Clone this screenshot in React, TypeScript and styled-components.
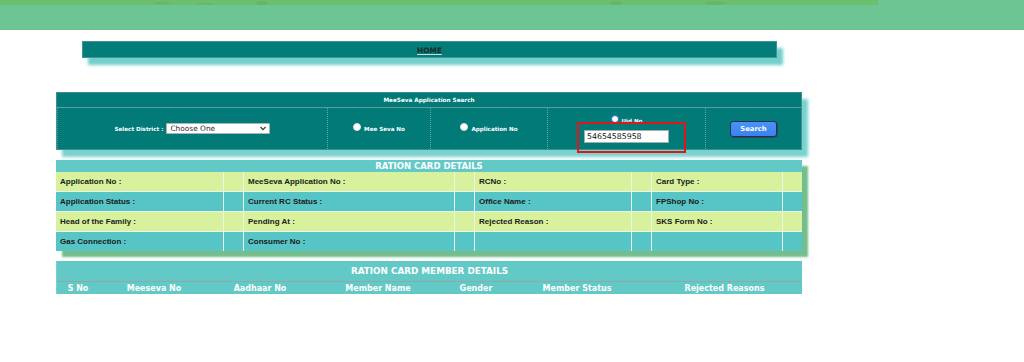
import React from "react";
import styled, { createGlobalStyle } from "styled-components";

const GlobalStyle = createGlobalStyle`
  html, body { margin: 0; padding: 0; background: #ffffff; }
  body { font-family: "Liberation Sans", Arial, sans-serif; }
  * { box-sizing: border-box; }
`;

const VERDANA = `"DejaVu Sans", Verdana, sans-serif`;
const ARIAL = `"Liberation Sans", Arial, sans-serif`;

const Page = styled.div`
  width: 1024px;
  min-height: 362px;
  background: #ffffff;
`;

const Banner = styled.header`
  height: 30px;
  background: #6cc593;
  border-bottom: 1px solid #6fbf8f;
`;

const BannerStrip = styled.svg`
  display: block;
  width: 878px;
  height: 5px;
  overflow: hidden;
`;

const Main = styled.main`
  width: 802px;
  padding-left: 56px;
  display: flex;
  flex-direction: column;
`;

const NavBar = styled.nav`
  margin: 11px 25px 0 26px;
  height: 17px;
  background: #037c7a;
  border: 1px solid #3c9593;
  box-shadow: 6px 7px 3px #72cfcb;
  display: flex;
  align-items: center;
  justify-content: center;
`;

const HomeLink = styled.a`
  font-family: ${VERDANA};
  font-weight: bold;
  font-size: 7.4px;
  color: #1d2a2a;
  text-decoration: underline;
  text-decoration-color: #c8d8d8;
  margin-top: 2px;
`;

const SearchPanel = styled.section`
  margin-top: 34px;
  background: #027a77;
  border: 1px solid #3e8f8d;
  box-shadow: 6px 7px 3px #7ad2ce;
`;

const PanelTitle = styled.div`
  height: 15px;
  border-bottom: 1px solid #5f9d9b;
  display: flex;
  align-items: center;
  justify-content: center;
  font-family: ${VERDANA};
  font-weight: bold;
  font-size: 5.7px;
  color: #ffffff;
`;

const SearchRow = styled.div`
  display: grid;
  grid-template-columns: 270px 103px 117px 158px 96px;
  height: 41px;
`;

const SearchCell = styled.div<{ $stack?: boolean }>`
  position: relative;
  display: flex;
  flex-direction: ${(p) => (p.$stack ? "column" : "row")};
  align-items: center;
  justify-content: center;
  gap: ${(p) => (p.$stack ? "6px" : "3px")};
  border-left: 1px dotted rgba(200, 230, 228, 0.45);
  &:first-child { border-left: 1px dotted rgba(200, 230, 228, 0.35); }
`;

const FieldLabel = styled.label<{ $raise?: number }>`
  font-family: ${VERDANA};
  font-weight: bold;
  font-size: 5.6px;
  color: #ffffff;
  display: inline-flex;
  align-items: center;
  gap: 3px;
  margin-top: ${(p) => p.$raise ?? 0}px;
`;

const Radio = styled.span<{ $checked?: boolean }>`
  display: inline-block;
  width: 8px;
  height: 8px;
  border-radius: 50%;
  background: #ffffff;
  border: ${(p) => (p.$checked ? "1.6px solid #1c6fe6" : "1px solid #d9e4e4")};
  margin-top: -4px;
`;

const SelectWrap = styled.div`
  position: relative;
  width: 104px;
  height: 11px;
`;

const Select = styled.select`
  display: block;
  appearance: none;
  -webkit-appearance: none;
  width: 100%;
  height: 11px;
  margin: 0;
  padding: 0 0 0 3px;
  border: 1px solid #a9b4b4;
  border-radius: 1px;
  background: #ffffff;
  font-family: ${VERDANA};
  font-size: 7.4px;
  line-height: 9px;
  color: #2b2b2b;
`;

const Chevron = styled.svg`
  position: absolute;
  right: 4px;
  top: 3px;
  width: 6px;
  height: 5px;
  pointer-events: none;
`;

const UidInput = styled.input`
  display: block;
  width: 85px;
  height: 13px;
  margin: 0;
  padding: 0 0 0 2px;
  border: 1px solid #9fb0b0;
  background: #ffffff;
  font-family: ${VERDANA};
  font-size: 7.8px;
  color: #111111;
`;

const Highlight = styled.div`
  position: absolute;
  left: 29px;
  top: 14px;
  width: 109px;
  height: 31px;
  border: 2px solid #e0161b;
  pointer-events: none;
`;

const SearchButton = styled.button`
  width: 47px;
  height: 16px;
  padding: 0;
  margin-top: 1px;
  background: linear-gradient(#4b92f6, #3a82ee);
  border: 1.5px solid #1f3350;
  border-radius: 3px;
  box-shadow: 1px 1px 0 #2a4a5a;
  font-family: ${VERDANA};
  font-weight: bold;
  font-size: 6.8px;
  color: #ffffff;
`;

const Details = styled.section`
  margin-top: 10px;
  background: #e9f6ea;
  box-shadow: 6px 6px 2px #74bd8c;
`;

const DetailsTitle = styled.div`
  height: 12px;
  background: #62c9c7;
  display: flex;
  align-items: center;
  justify-content: center;
  font-family: ${VERDANA};
  font-weight: bold;
  font-size: 8.5px;
  color: #ffffff;
`;

const DetailRows = styled.div`
  display: flex;
  flex-direction: column;
  gap: 1px;
  background: #e9f6ea;
`;

const DetailRow = styled.div`
  display: grid;
  grid-template-columns: 167px 19px 210px 19px 156px 19px 130px 19px;
  column-gap: 1px;
  height: 19px;
`;

const DetailCell = styled.div<{ $tone: "yellow" | "teal" }>`
  background: ${(p) => (p.$tone === "yellow" ? "#d8f19c" : "#57c5c5")};
  display: flex;
  align-items: center;
  padding-left: 4px;
  font-family: ${ARIAL};
  font-weight: bold;
  font-size: 8px;
  color: #1a1a1a;
  white-space: nowrap;
`;

const Members = styled.section`
  margin-top: 10px;
  background: #63c9c6;
  border-left: 1px dotted #8fd6d3;
`;

const MembersTitle = styled.div`
  height: 21px;
  border-bottom: 1px solid #8fa9a8;
  display: flex;
  align-items: center;
  justify-content: center;
  font-family: ${VERDANA};
  font-weight: bold;
  font-size: 8.8px;
  color: #ffffff;
`;

const MemberHead = styled.div`
  display: grid;
  grid-template-columns: 42px 110px 102px 134px 62px 140px 155px;
  height: 12px;
`;

const MemberCol = styled.div`
  display: flex;
  align-items: center;
  justify-content: center;
  font-family: ${VERDANA};
  font-weight: bold;
  font-size: 8px;
  color: #ffffff;
  white-space: nowrap;
`;

type Tone = "yellow" | "teal";

const detailRows: { tone: Tone; cells: string[] }[] = [
  { tone: "yellow", cells: ["Application No :", "MeeSeva Application No :", "RCNo :", "Card Type :"] },
  { tone: "teal", cells: ["Application Status :", "Current RC Status :", "Office Name :", "FPShop No :"] },
  { tone: "yellow", cells: ["Head of the Family :", "Pending At :", "Rejected Reason :", "SKS Form No :"] },
  { tone: "teal", cells: ["Gas Connection :", "Consumer No :", "", ""] },
];

const memberCols = ["S No", "Meeseva No", "Aadhaar No", "Member Name", "Gender", "Member Status", "Rejected Reasons"];

export default function App() {
  return (
    <Page>
      <GlobalStyle />
      <Banner>
        <BannerStrip viewBox="0 0 878 5" preserveAspectRatio="none">
          <rect x="0" y="0" width="878" height="5" fill="#6bbf6d" />
          <ellipse cx="162" cy="3" rx="8" ry="1.5" fill="#66b76a" />
          <ellipse cx="205" cy="4" rx="9" ry="1.2" fill="#67b86a" />
          <ellipse cx="262" cy="3" rx="6" ry="2" fill="#64b568" />
          <ellipse cx="616" cy="3" rx="6" ry="2" fill="#65b669" />
          <ellipse cx="716" cy="3" rx="11" ry="2" fill="#66b76a" />
        </BannerStrip>
      </Banner>
      <Main>
        <NavBar>
          <HomeLink>HOME</HomeLink>
        </NavBar>

        <SearchPanel>
          <PanelTitle>MeeSeva Application Search</PanelTitle>
          <SearchRow>
            <SearchCell>
              <FieldLabel>Select District :</FieldLabel>
              <SelectWrap>
                <Select defaultValue="0">
                  <option value="0">Choose One</option>
                </Select>
                <Chevron viewBox="0 0 6 5">
                  <path d="M0.5 1 L3 3.6 L5.5 1" fill="none" stroke="#333" strokeWidth="1.1" />
                </Chevron>
              </SelectWrap>
            </SearchCell>
            <SearchCell>
              <FieldLabel>
                <Radio />
                Mee Seva No
              </FieldLabel>
            </SearchCell>
            <SearchCell>
              <FieldLabel>
                <Radio />
                Application No
              </FieldLabel>
            </SearchCell>
            <SearchCell $stack>
              <FieldLabel $raise={4}>
                <Radio $checked />
                Uid No
              </FieldLabel>
              <UidInput defaultValue="54654585958" />
              <Highlight />
            </SearchCell>
            <SearchCell>
              <SearchButton>Search</SearchButton>
            </SearchCell>
          </SearchRow>
        </SearchPanel>

        <Details>
          <DetailsTitle>RATION CARD DETAILS</DetailsTitle>
          <DetailRows>
            {detailRows.map((row, i) => (
              <DetailRow key={i}>
                {row.cells.map((c, j) => (
                  <React.Fragment key={j}>
                    <DetailCell $tone={row.tone}>{c}</DetailCell>
                    <DetailCell $tone={row.tone} />
                  </React.Fragment>
                ))}
              </DetailRow>
            ))}
          </DetailRows>
        </Details>

        <Members>
          <MembersTitle>RATION CARD MEMBER DETAILS</MembersTitle>
          <MemberHead>
            {memberCols.map((c) => (
              <MemberCol key={c}>{c}</MemberCol>
            ))}
          </MemberHead>
        </Members>
      </Main>
    </Page>
  );
}
